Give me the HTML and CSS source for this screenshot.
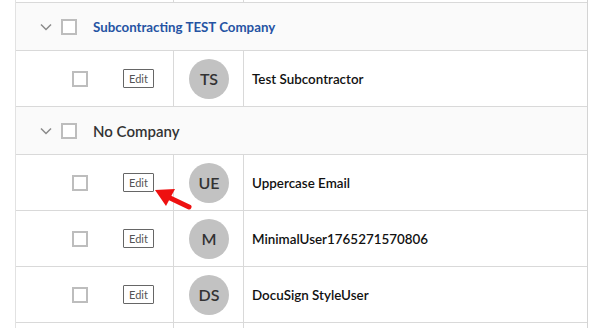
FILE: index.html
```html
<!DOCTYPE html>
<html>
<head>
<meta charset="utf-8">
<link rel="stylesheet" href="styles.css">
</head>
<body>
<div class="table">
  <div class="row top">
    <div class="cell c1"></div><div class="cell c2"></div><div class="cell c3"></div>
  </div>

  <div class="row group">
    <span class="chev"><svg width="12" height="8" viewBox="0 0 12 8"><path d="M1 1.5 L6 6.5 L11 1.5" fill="none" stroke="#8a8a8a" stroke-width="1.5"/></svg></span>
    <span class="box"></span>
    <span class="gname link">Subcontracting TEST Company</span>
  </div>

  <div class="row data">
    <div class="cell c1"><span class="box"></span><span class="edit">Edit</span></div>
    <div class="cell c2"><span class="avatar">TS</span></div>
    <div class="cell c3"><span class="name">Test Subcontractor</span></div>
  </div>

  <div class="row group">
    <span class="chev"><svg width="12" height="8" viewBox="0 0 12 8"><path d="M1 1.5 L6 6.5 L11 1.5" fill="none" stroke="#8a8a8a" stroke-width="1.5"/></svg></span>
    <span class="box"></span>
    <span class="gname">No Company</span>
  </div>

  <div class="row data">
    <div class="cell c1"><span class="box"></span><span class="edit">Edit</span></div>
    <div class="cell c2"><span class="avatar">UE</span></div>
    <div class="cell c3"><span class="name">Uppercase Email</span></div>
  </div>

  <div class="row data">
    <div class="cell c1"><span class="box"></span><span class="edit">Edit</span></div>
    <div class="cell c2"><span class="avatar">M</span></div>
    <div class="cell c3"><span class="name">MinimalUser1765271570806</span></div>
  </div>

  <div class="row data">
    <div class="cell c1"><span class="box"></span><span class="edit">Edit</span></div>
    <div class="cell c2"><span class="avatar">DS</span></div>
    <div class="cell c3"><span class="name">DocuSign StyleUser</span></div>
  </div>

  <div class="row data">
    <div class="cell c1"></div><div class="cell c2"></div><div class="cell c3"></div>
  </div>
</div>

<svg class="arrow" width="593" height="328" viewBox="0 0 593 328">
  <line x1="189" y1="207" x2="168" y2="197" stroke="#ee1010" stroke-width="5" stroke-linecap="round"/>
  <polygon points="155,190 175,189 166,206" fill="#ee1010"/>
</svg>
</body>
</html>
```

FILE: styles.css
```css
html, body {
  margin: 0;
  padding: 0;
  background: #fff;
  font-family: Lato, "Open Sans", sans-serif;
  overflow: hidden;
}

.table {
  margin-left: 15px;
  width: 573px;
  border-left: 1px solid #e2e2e2;
  border-right: 1px solid #d4d4d4;
  box-sizing: border-box;
}

.row {
  box-sizing: border-box;
  border-bottom: 1px solid #d9d9d9;
}

.row.top,
.row.data {
  display: grid;
  grid-template-columns: 157px 70px 1fr;
}

.row.top { height: 3px; }
.row.data { height: 56px; }

.cell {
  box-sizing: border-box;
  display: flex;
  align-items: center;
}

.c2, .c3 { border-left: 1px solid #d9d9d9; }

.row.group {
  height: 48px;
  background: #fafafa;
  display: flex;
  align-items: center;
}

.chev {
  display: flex;
  margin-left: 24px;
  width: 12px;
  margin-top: 1px;
}

.box {
  display: inline-block;
  width: 16px;
  height: 16px;
  border: 2px solid #bdbdbd;
  box-sizing: border-box;
  background: #fff;
}

.group .box { margin-left: 9px; }

.gname {
  margin-left: 16px;
  font-size: 15px;
  font-weight: 600;
  color: #333;
}

.gname.link {
  color: #2553a3;
  font-size: 13.3px;
  font-weight: 700;
}

.c1 .box { margin-left: 56px; }

.edit {
  margin-left: 35px;
  width: 31px;
  height: 19px;
  box-sizing: border-box;
  border: 1px solid #666;
  border-radius: 1px;
  font-size: 11px;
  color: #555;
  display: flex;
  align-items: center;
  justify-content: center;
}

.c2 { justify-content: center; padding-left: 1px; }

.avatar {
  width: 40px;
  height: 40px;
  border-radius: 50%;
  background: #c2c2c2;
  color: #333;
  font-size: 16px;
  font-weight: 600;
  display: flex;
  align-items: center;
  justify-content: center;
}

.c3 { padding-left: 8px; }

.name {
  font-size: 13.4px;
  font-weight: 600;
  color: #111;
}

.arrow {
  position: absolute;
  left: 0;
  top: 0;
  pointer-events: none;
}
```
